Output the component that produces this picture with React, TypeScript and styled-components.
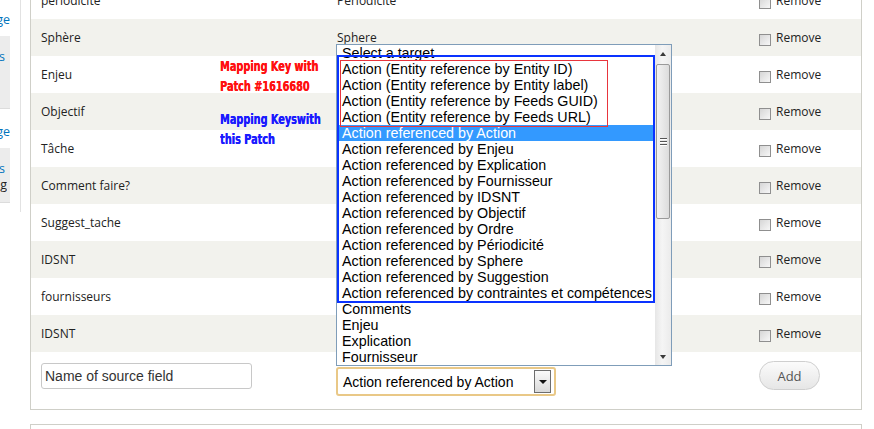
import React from 'react';
import styled, { createGlobalStyle } from 'styled-components';

const GlobalStyle = createGlobalStyle`
  html, body {
    margin: 0;
    padding: 0;
    background: #fff;
    overflow: hidden;
  }
  body {
    font-family: 'Open Sans', 'Liberation Sans', sans-serif;
  }
`;

type Mapping = { source: string; target: string };

const mappings: Mapping[] = [
  { source: 'periodicite', target: 'Periodicite' },
  { source: 'Sphère', target: 'Sphere' },
  { source: 'Enjeu', target: 'Enjeu' },
  { source: 'Objectif', target: 'Objectif' },
  { source: 'Tâche', target: 'Action' },
  { source: 'Comment faire?', target: 'Explication' },
  { source: 'Suggest_tache', target: 'Suggestion' },
  { source: 'IDSNT', target: 'IDSNT' },
  { source: 'fournisseurs', target: 'Fournisseur' },
  { source: 'IDSNT', target: 'GUID' },
];

const targets = [
  'Select a target',
  'Action (Entity reference by Entity ID)',
  'Action (Entity reference by Entity label)',
  'Action (Entity reference by Feeds GUID)',
  'Action (Entity reference by Feeds URL)',
  'Action referenced by Action',
  'Action referenced by Enjeu',
  'Action referenced by Explication',
  'Action referenced by Fournisseur',
  'Action referenced by IDSNT',
  'Action referenced by Objectif',
  'Action referenced by Ordre',
  'Action referenced by Périodicité',
  'Action referenced by Sphere',
  'Action referenced by Suggestion',
  'Action referenced by contraintes et compétences',
  'Comments',
  'Enjeu',
  'Explication',
  'Fournisseur',
];

const SELECTED = 5;

const Page = styled.div`
  display: flex;
  align-items: flex-start;
  width: 874px;
  height: 429px;
  overflow: hidden;
  background: #fff;
`;

/* left admin menu, mostly scrolled out of view */
const Sidebar = styled.aside`
  flex: none;
  width: 20px;
  height: 200px;
  padding-top: 12px;
  margin-right: 9px;
  border-right: 1px solid #e2e2e2;
  font-size: 12.5px;
  line-height: 16px;
`;

const SideLine = styled.div<{ $dark?: boolean; $w?: number }>`
  display: flex;
  justify-content: flex-end;
  width: ${(p) => p.$w ?? 10}px;
  overflow: hidden;
  white-space: nowrap;
  color: ${(p) => (p.$dark ? '#222' : '#0074bd')};
`;

const SideLink = styled(SideLine)`
  margin-bottom: 8px;
`;

const SideBox = styled.div<{ $h: number }>`
  width: 10px;
  height: ${(p) => p.$h}px;
  box-sizing: border-box;
  padding-top: 13px;
  background: #ececec;
  border-bottom: 1px solid #dcdcdc;
  margin-bottom: 15px;
`;

const Main = styled.div`
  flex: none;
  width: 832px;
  margin-top: -18px;
`;

const Fieldset = styled.div`
  position: relative;
  border: 1px solid #cfcfc8;
  border-top: none;
`;

const NextFieldset = styled.div`
  margin-top: 14px;
  height: 60px;
  border: 1px solid #cfcfc8;
`;

const Row = styled.div<{ $striped?: boolean }>`
  display: grid;
  grid-template-columns: 296px 423px 1fr;
  align-items: center;
  height: 37px;
  padding-left: 10px;
  background: ${(p) => (p.$striped ? '#f2f2ed' : '#fff')};
  color: #222;
  font-size: 12px;
`;

const Cell = styled.div`
  white-space: nowrap;
`;

const RemoveLabel = styled.label`
  display: flex;
  align-items: center;
  gap: 5px;
  margin-left: -1px;
`;

const CheckBox = styled.span`
  width: 12px;
  height: 12px;
  box-sizing: border-box;
  margin-top: 5px;
  border: 1px solid #8f8f8f;
  background: linear-gradient(135deg, #d6d6d6, #f7f7f7);
`;

const AddRow = styled.div`
  display: grid;
  grid-template-columns: 296px 423px 1fr;
  align-items: start;
  height: 57px;
  padding-left: 10px;
`;

const TextInput = styled.div`
  margin-top: 11px;
  width: 211px;
  height: 26px;
  box-sizing: border-box;
  border: 1px solid #c8c8c8;
  border-radius: 3px;
  padding-left: 3px;
  display: flex;
  align-items: center;
  font-family: 'Liberation Sans', Arial, sans-serif;
  font-size: 14px;
  color: #333;
`;

const SelectWrap = styled.div`
  position: relative;
  margin-top: 15px;
  margin-left: -1px;
  width: 220px;
`;

const SelectBox = styled.div`
  height: 29px;
  box-sizing: border-box;
  border: 2px solid #e9c887;
  border-radius: 3px;
  display: flex;
  align-items: center;
  justify-content: space-between;
  padding: 0 3px 0 5px;
  font-family: 'Liberation Sans', Arial, sans-serif;
  font-size: 14px;
  color: #000;
`;

const DropButton = styled.span`
  width: 17px;
  height: 23px;
  box-sizing: border-box;
  border: 1px solid #6d6d6d;
  background: linear-gradient(#fafafa, #d9d9d9);
  display: flex;
  align-items: center;
  justify-content: center;
  &::after {
    content: '';
    border-left: 4px solid transparent;
    border-right: 4px solid transparent;
    border-top: 4px solid #111;
  }
`;

const Popup = styled.div`
  position: absolute;
  left: 0;
  bottom: calc(100% + 1px);
  width: 336px;
  height: 322px;
  box-sizing: border-box;
  border: 1px solid #7f9db9;
  background: #fff;
  display: flex;
  z-index: 2;
`;

const OptionList = styled.ul`
  flex: 1;
  margin: 0;
  padding: 0;
  list-style: none;
  font-family: 'Liberation Sans', Arial, sans-serif;
  font-size: 14.3px;
  line-height: 16px;
  color: #000;
  overflow: hidden;
`;

const Option = styled.li<{ $selected?: boolean }>`
  height: 16px;
  padding-left: 5px;
  white-space: nowrap;
  background: ${(p) => (p.$selected ? '#3399ff' : 'transparent')};
  color: ${(p) => (p.$selected ? '#fff' : '#000')};
`;

const Scrollbar = styled.div`
  width: 16px;
  display: flex;
  flex-direction: column;
  background: linear-gradient(to right, #e6e6e6, #f5f5f5 45%, #ebebeb);
`;

const ScrollArrow = styled.div<{ $up?: boolean }>`
  height: 17px;
  display: flex;
  align-items: center;
  justify-content: center;
  &::after {
    content: '';
    border-left: 3.5px solid transparent;
    border-right: 3.5px solid transparent;
    ${(p) =>
      p.$up ? 'border-bottom: 4px solid #3a3a3a;' : 'border-top: 4px solid #3a3a3a;'}
  }
`;

const ScrollThumb = styled.div`
  margin: 2px 1px 0;
  height: 155px;
  box-sizing: border-box;
  border: 1px solid #9a9a9a;
  border-radius: 2px;
  background: linear-gradient(to right, #f3f3f3, #dcdcdc);
  display: flex;
  flex-direction: column;
  align-items: center;
  justify-content: center;
  gap: 2px;
`;

const Grip = styled.span`
  width: 7px;
  height: 1px;
  background: #555;
  box-shadow: 0 1px 0 #fff;
`;

const ScrollTrack = styled.div`
  flex: 1;
`;

const Mark = styled.div<{ $color: string; $w: number }>`
  position: absolute;
  border: ${(p) => p.$w}px solid ${(p) => p.$color};
  box-sizing: border-box;
  pointer-events: none;
`;

const BlueMark = styled(Mark)`
  left: 0;
  top: 10px;
  width: 318px;
  height: 248px;
`;

const RedMark = styled(Mark)`
  left: 3px;
  top: 15px;
  width: 268px;
  height: 67px;
`;

/* hand-written annotations laid over the screenshot */
const Notes = styled.div`
  position: absolute;
  left: 189px;
  top: 75px;
  font-family: 'DejaVu Sans Condensed', 'DejaVu Sans', sans-serif;
  font-weight: bold;
  font-size: 13.5px;
  line-height: 19.5px;
  transform: scaleX(0.8);
  transform-origin: left top;
`;

const Note = styled.div<{ $color: string }>`
  color: ${(p) => p.$color};
  white-space: nowrap;
  text-shadow: 0.4px 0 0 ${(p) => p.$color};
  & + & {
    margin-top: 14px;
  }
`;

const AddButton = styled.button`
  margin-top: 9px;
  margin-left: -1px;
  width: 61px;
  height: 29px;
  border: 1px solid #cfcfcf;
  border-radius: 15px;
  background: linear-gradient(#fbfbfb, #e6e6e6);
  font-family: 'Open Sans', sans-serif;
  font-size: 13px;
  color: #555;
  padding: 0;
`;

const App: React.FC = () => {
  return (
    <Page>
      <GlobalStyle />
      <Sidebar>
        <SideLink>Manage</SideLink>
        <SideBox $h={73}>
          <SideLine $w={5}>Settings</SideLine>
        </SideBox>
        <SideLink>Manage</SideLink>
        <SideBox $h={55}>
          <SideLine $w={5}>Mappings</SideLine>
          <SideLine $dark $w={7}>
            Processing
          </SideLine>
        </SideBox>
      </Sidebar>
      <Main>
        <Fieldset>
          {mappings.map((m, i) => (
            <Row key={i} $striped={i % 2 === 1}>
              <Cell>{m.source}</Cell>
              <Cell>{m.target}</Cell>
              <RemoveLabel>
                <CheckBox />
                Remove
              </RemoveLabel>
            </Row>
          ))}
          <AddRow>
            <TextInput>Name of source field</TextInput>
            <SelectWrap>
              <Popup>
                <OptionList>
                  {targets.map((t, i) => (
                    <Option key={i} $selected={i === SELECTED}>
                      {t}
                    </Option>
                  ))}
                </OptionList>
                <Scrollbar>
                  <ScrollArrow $up />
                  <ScrollThumb>
                    <Grip />
                    <Grip />
                    <Grip />
                  </ScrollThumb>
                  <ScrollTrack />
                  <ScrollArrow />
                </Scrollbar>
                <BlueMark $color="#0a33ff" $w={2} />
                <RedMark $color="#e8353d" $w={1} />
              </Popup>
              <SelectBox>
                Action referenced by Action
                <DropButton />
              </SelectBox>
            </SelectWrap>
            <AddButton>Add</AddButton>
          </AddRow>
          <Notes>
            <Note $color="#ff1010">
              Mapping Key with
              <br />
              Patch #1616680
            </Note>
            <Note $color="#1a1aff">
              Mapping Keyswith
              <br />
              this Patch
            </Note>
          </Notes>
        </Fieldset>
        <NextFieldset />
      </Main>
    </Page>
  );
};

export default App;
